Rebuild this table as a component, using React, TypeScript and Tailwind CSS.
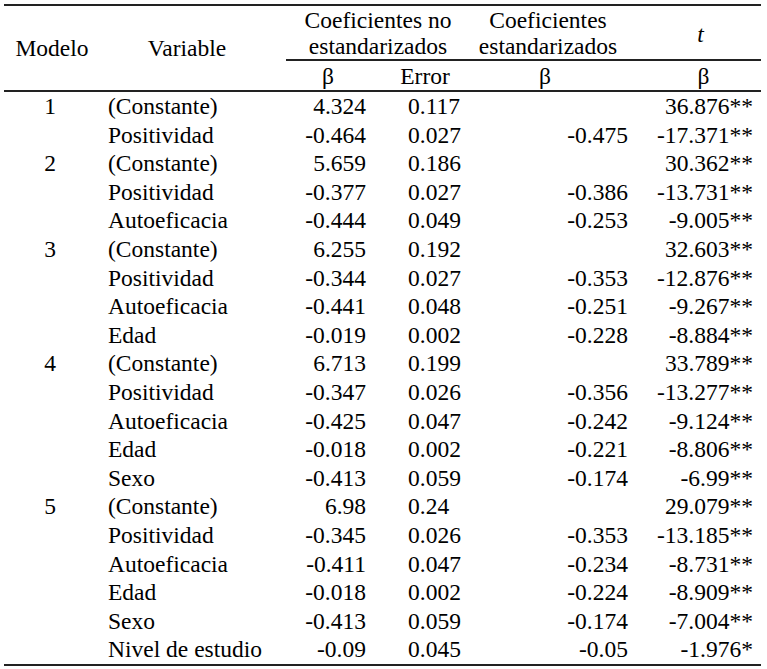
import React from 'react';

const rows: string[][] = [
  ['1', '(Constante)', '4.324', '0.117', '', '36.876**'],
  ['', 'Positividad', '-0.464', '0.027', '-0.475', '-17.371**'],
  ['2', '(Constante)', '5.659', '0.186', '', '30.362**'],
  ['', 'Positividad', '-0.377', '0.027', '-0.386', '-13.731**'],
  ['', 'Autoeficacia', '-0.444', '0.049', '-0.253', '-9.005**'],
  ['3', '(Constante)', '6.255', '0.192', '', '32.603**'],
  ['', 'Positividad', '-0.344', '0.027', '-0.353', '-12.876**'],
  ['', 'Autoeficacia', '-0.441', '0.048', '-0.251', '-9.267**'],
  ['', 'Edad', '-0.019', '0.002', '-0.228', '-8.884**'],
  ['4', '(Constante)', '6.713', '0.199', '', '33.789**'],
  ['', 'Positividad', '-0.347', '0.026', '-0.356', '-13.277**'],
  ['', 'Autoeficacia', '-0.425', '0.047', '-0.242', '-9.124**'],
  ['', 'Edad', '-0.018', '0.002', '-0.221', '-8.806**'],
  ['', 'Sexo', '-0.413', '0.059', '-0.174', '-6.99**'],
  ['5', '(Constante)', '6.98', '0.24', '', '29.079**'],
  ['', 'Positividad', '-0.345', '0.026', '-0.353', '-13.185**'],
  ['', 'Autoeficacia', '-0.411', '0.047', '-0.234', '-8.731**'],
  ['', 'Edad', '-0.018', '0.002', '-0.224', '-8.909**'],
  ['', 'Sexo', '-0.413', '0.059', '-0.174', '-7.004**'],
  ['', 'Nivel de estudio', '-0.09', '0.045', '-0.05', '-1.976*'],
];

const App = () => {
  return (
    <div className="w-[767px] h-[669px] bg-white text-black text-[23.5px] pt-[4px] pl-[4px] font-['Liberation_Serif','Times_New_Roman',serif]">
      <div className="w-[757px] border-t-2 border-b-2 border-[#222]">
        {/* header */}
        <div className="grid grid-cols-[96px_186px_94px_90px_170px_121px] grid-rows-[55px_29px] border-b-2 border-[#222] leading-[26px]">
          <div className="row-span-2 flex items-center justify-center">Modelo</div>
          <div className="row-span-2 flex items-center justify-center pr-[12px]">Variable</div>
          <div className="col-span-2 flex flex-col items-center justify-center border-b-2 border-[#222]">
            <span>Coeficientes no</span>
            <span>estandarizados</span>
          </div>
          <div className="flex flex-col items-center justify-center border-b-2 border-[#222] pr-[14px]">
            <span>Coeficientes</span>
            <span>estandarizados</span>
          </div>
          <div className="flex items-center justify-center border-b-2 border-[#222] pt-[2px] italic">t</div>
          <div className="flex items-center justify-center pr-[10px]">β</div>
          <div className="flex items-center justify-center">Error</div>
          <div className="flex items-center justify-center pr-[20px]">β</div>
          <div className="flex items-center justify-center pl-[6px]">β</div>
        </div>

        {/* body */}
        <div className="flex flex-col">
          {rows.map((r, i) => (
            <div
              key={i}
              className="grid grid-cols-[96px_186px_94px_90px_170px_121px] h-[28.6px] leading-[28.6px] whitespace-nowrap"
            >
              <div className="text-center pr-[4px]">{r[0]}</div>
              <div className="pl-[8px]">{r[1]}</div>
              <div className="text-right pr-[14px]">{r[2]}</div>
              <div className="pl-[28px]">{r[3]}</div>
              <div className="text-right pr-[12px]">{r[4]}</div>
              <div className="text-right pr-[8px]">{r[5]}</div>
            </div>
          ))}
        </div>
      </div>
    </div>
  );
};

export default App;
